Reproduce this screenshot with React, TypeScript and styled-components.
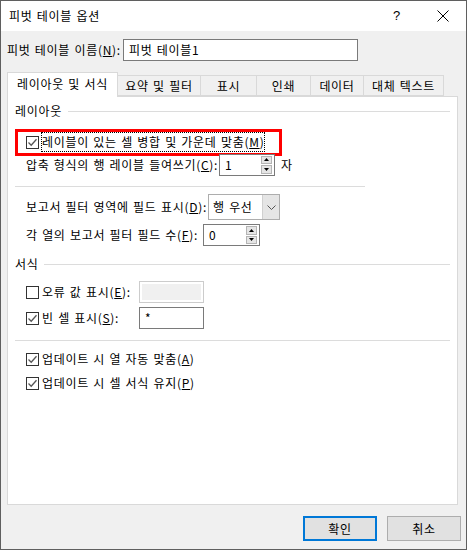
import styled, { createGlobalStyle } from "styled-components";

const GlobalStyle = createGlobalStyle`
  html, body {
    margin: 0;
    padding: 0;
    background: #ffffff;
  }
  body {
    font-family: "Noto Sans CJK KR", "Noto Sans", sans-serif;
    font-size: 12px;
    letter-spacing: 0.7px;
    word-spacing: 1px;
    color: #000000;
  }
  * {
    box-sizing: border-box;
  }
`;

const Window = styled.div`
  width: 467px;
  height: 550px;
  border: 1px solid #5f5f5f;
  display: flex;
  flex-direction: column;
  background: #f0f0f0;
`;

const TitleBar = styled.div`
  height: 30px;
  background: #ffffff;
  display: flex;
  align-items: center;
  padding-left: 8px;
  line-height: 16px;
`;

const TitleText = styled.span`
  flex: 1;
`;

const TitleButton = styled.span`
  width: 46px;
  height: 30px;
  display: flex;
  align-items: center;
  justify-content: center;
  font-family: "Liberation Sans", sans-serif;
  font-size: 13px;
`;

const Body = styled.div`
  flex: 1;
  display: flex;
  flex-direction: column;
  padding: 8px 0 0 6px;
`;

const NameRow = styled.div`
  display: flex;
  align-items: center;
  height: 22px;
`;

const Label = styled.span<{ $w?: number }>`
  display: inline-block;
  white-space: nowrap;
  line-height: 16px;
  width: ${(p) => (p.$w ? `${p.$w}px` : "auto")};
  flex-shrink: 0;
`;

const TextBox = styled.div<{ $w: number; $h?: number; $disabled?: boolean }>`
  width: ${(p) => p.$w}px;
  height: ${(p) => p.$h ?? 22}px;
  border: 1px solid ${(p) => (p.$disabled ? "#cccccc" : "#7a7a7a")};
  background: ${(p) => (p.$disabled ? "#f0f0f0" : "#ffffff")};
  box-shadow: ${(p) => (p.$disabled ? "inset 0 0 0 2px #ffffff" : "none")};
  display: flex;
  align-items: center;
  padding-left: 5px;
  line-height: 16px;
  flex-shrink: 0;
`;

const TabStrip = styled.div`
  display: flex;
  align-items: flex-end;
  margin-top: 11px;
  height: 24px;
  position: relative;
  z-index: 1;
`;

const Tab = styled.div<{ $active?: boolean; $w: number }>`
  width: ${(p) => p.$w}px;
  height: ${(p) => (p.$active ? 25 : 21)}px;
  margin-bottom: ${(p) => (p.$active ? -1 : 0)}px;
  display: flex;
  align-items: center;
  justify-content: center;
  padding-bottom: ${(p) => (p.$active ? 2 : 0)}px;
  background: ${(p) => (p.$active ? "#ffffff" : "#f0f0f0")};
  border: 1px solid #d9d9d9;
  border-left: none;
  border-bottom: ${(p) => (p.$active ? "none" : "1px solid #d9d9d9")};
  white-space: nowrap;
  line-height: 16px;
  &:first-child {
    border-left: 1px solid #d9d9d9;
  }
`;

const Panel = styled.div`
  width: 451px;
  height: 409px;
  background: #ffffff;
  border: 1px solid #d9d9d9;
  display: flex;
  flex-direction: column;
  padding: 6px 7px 0 7px;
`;

const SectionHeader = styled.div<{ $mt: number }>`
  display: flex;
  align-items: center;
  height: 16px;
  margin-top: ${(p) => p.$mt}px;
  line-height: 16px;
  span {
    white-space: nowrap;
  }
  &::after {
    content: "";
    flex: 1;
    height: 1px;
    background: #dcdcdc;
    margin-left: 6px;
  }
`;

const Separator = styled.div<{ $mt: number; $w?: number }>`
  height: 1px;
  background: #dcdcdc;
  margin-top: ${(p) => p.$mt}px;
  width: ${(p) => (p.$w ? `${p.$w}px` : "100%")};
`;

const Row = styled.div<{ $mt: number; $h?: number }>`
  display: flex;
  align-items: center;
  margin-top: ${(p) => p.$mt}px;
  height: ${(p) => p.$h ?? 20}px;
  padding-left: 11px;
  position: relative;
`;

const Highlight = styled.div`
  position: absolute;
  left: 0;
  top: -3px;
  width: 267px;
  height: 27px;
  border: 3px solid #ff0000;
  pointer-events: none;
`;

const Box = styled.span`
  width: 13px;
  height: 13px;
  border: 1px solid #333333;
  background: #ffffff;
  display: inline-flex;
  align-items: center;
  justify-content: center;
  flex-shrink: 0;
  margin-right: 3px;
`;

const FocusLabel = styled.span`
  outline: 1px dotted #000000;
  padding: 1px 0 1px 0;
  line-height: 16px;
  white-space: nowrap;
`;

const SpinWrap = styled.div<{ $w: number }>`
  width: ${(p) => p.$w}px;
  height: 22px;
  border: 1px solid #7a7a7a;
  background: #ffffff;
  display: flex;
  align-items: stretch;
  padding: 1px;
  flex-shrink: 0;
`;

const SpinValue = styled.span`
  flex: 1;
  display: flex;
  align-items: center;
  padding-left: 4px;
  line-height: 16px;
`;

const SpinButtons = styled.div`
  width: 11px;
  display: flex;
  flex-direction: column;
  gap: 1px;
  margin-right: 1px;
`;

const SpinButton = styled.span`
  flex: 1;
  background: #e5e5e5;
  border: 1px solid #b4b4b4;
  display: flex;
  align-items: center;
  justify-content: center;
`;

const Select = styled.div`
  width: 72px;
  height: 26px;
  border: 1px solid #adadad;
  background: #ffffff;
  display: flex;
  align-items: stretch;
  flex-shrink: 0;
`;

const SelectValue = styled.span`
  flex: 1;
  display: flex;
  align-items: center;
  padding-left: 4px;
  line-height: 16px;
  white-space: nowrap;
`;

const SelectArrow = styled.span`
  width: 17px;
  background: #e5e5e5;
  border-left: 1px solid #d0d0d0;
  display: flex;
  align-items: center;
  justify-content: center;
`;

const Suffix = styled.span`
  margin-left: 6px;
  line-height: 16px;
`;

const Footer = styled.div`
  display: flex;
  justify-content: flex-end;
  gap: 10px;
  margin-top: 11px;
  padding-right: 5px;
`;

const Button = styled.div<{ $primary?: boolean }>`
  width: 74px;
  height: 25px;
  background: #e1e1e1;
  border: ${(p) => (p.$primary ? "2px solid #0078d7" : "1px solid #adadad")};
  display: flex;
  align-items: center;
  justify-content: center;
  line-height: 16px;
`;

function Check({ checked }: { checked: boolean }) {
  return (
    <Box>
      {checked && (
        <svg width="11" height="11" viewBox="0 0 11 11">
          <polyline
            points="1.5,5.5 4.2,8.2 9.5,2.2"
            fill="none"
            stroke="#555555"
            strokeWidth="1.3"
          />
        </svg>
      )}
    </Box>
  );
}

function Spin({ value, w }: { value: string; w: number }) {
  return (
    <SpinWrap $w={w}>
      <SpinValue>{value}</SpinValue>
      <SpinButtons>
        <SpinButton>
          <svg width="5" height="3" viewBox="0 0 5 3">
            <polygon points="2.5,0 5,3 0,3" fill="#000" />
          </svg>
        </SpinButton>
        <SpinButton>
          <svg width="5" height="3" viewBox="0 0 5 3">
            <polygon points="0,0 5,0 2.5,3" fill="#000" />
          </svg>
        </SpinButton>
      </SpinButtons>
    </SpinWrap>
  );
}

const tabs = [
  { label: "레이아웃 및 서식", w: 111 },
  { label: "요약 및 필터", w: 83 },
  { label: "표시", w: 56 },
  { label: "인쇄", w: 54 },
  { label: "데이터", w: 53 },
  { label: "대체 텍스트", w: 80 },
];

export default function App() {
  return (
    <>
      <GlobalStyle />
      <Window>
        <TitleBar>
          <TitleText>피벗 테이블 옵션</TitleText>
          <TitleButton>?</TitleButton>
          <TitleButton>
            <svg width="12" height="12" viewBox="0 0 12 12">
              <path d="M0.5 0.5 L11.5 11.5 M11.5 0.5 L0.5 11.5" stroke="#000" strokeWidth="1" />
            </svg>
          </TitleButton>
        </TitleBar>
        <Body>
          <NameRow>
            <Label $w={116}>
              피벗 테이블 이름(<u>N</u>):
            </Label>
            <TextBox $w={235}>피벗 테이블1</TextBox>
          </NameRow>

          <TabStrip>
            {tabs.map((t, i) => (
              <Tab key={t.label} $w={t.w} $active={i === 0}>
                {t.label}
              </Tab>
            ))}
          </TabStrip>

          <Panel>
            <SectionHeader $mt={0}>
              <span>레이아웃</span>
            </SectionHeader>
            <Row $mt={13}>
              <Highlight />
              <Check checked />
              <FocusLabel>
                레이블이 있는 셀 병합 및 가운데 맞춤(<u>M</u>)
              </FocusLabel>
            </Row>
            <Row $mt={2} $h={21}>
              <Label $w={193}>
                압축 형식의 행 레이블 들여쓰기(<u>C</u>):
              </Label>
              <Spin value="1" w={56} />
              <Suffix>자</Suffix>
            </Row>
            <Separator $mt={11} $w={350} />
            <Row $mt={7} $h={26}>
              <Label $w={182}>
                보고서 필터 영역에 필드 표시(<u>D</u>):
              </Label>
              <Select>
                <SelectValue>행 우선</SelectValue>
                <SelectArrow>
                  <svg width="9" height="5" viewBox="0 0 9 5">
                    <polyline points="0.5,0.5 4.5,4.5 8.5,0.5" fill="none" stroke="#555" strokeWidth="1" />
                  </svg>
                </SelectArrow>
              </Select>
            </Row>
            <Row $mt={4} $h={22}>
              <Label $w={177}>
                각 열의 보고서 필터 필드 수(<u>F</u>):
              </Label>
              <Spin value="0" w={57} />
            </Row>

            <SectionHeader $mt={10}>
              <span>서식</span>
            </SectionHeader>
            <Row $mt={9} $h={22}>
              <Check checked={false} />
              <Label $w={97}>
                오류 값 표시(<u>E</u>):
              </Label>
              <TextBox $w={65} $disabled />
            </Row>
            <Row $mt={4} $h={22}>
              <Check checked />
              <Label $w={97}>
                빈 셀 표시(<u>S</u>):
              </Label>
              <TextBox $w={65}>*</TextBox>
            </Row>
            <Separator $mt={11} />
            <Row $mt={8}>
              <Check checked />
              <Label>
                업데이트 시 열 자동 맞춤(<u>A</u>)
              </Label>
            </Row>
            <Row $mt={4}>
              <Check checked />
              <Label>
                업데이트 시 셀 서식 유지(<u>P</u>)
              </Label>
            </Row>
          </Panel>

          <Footer>
            <Button $primary>확인</Button>
            <Button>취소</Button>
          </Footer>
        </Body>
      </Window>
    </>
  );
}
